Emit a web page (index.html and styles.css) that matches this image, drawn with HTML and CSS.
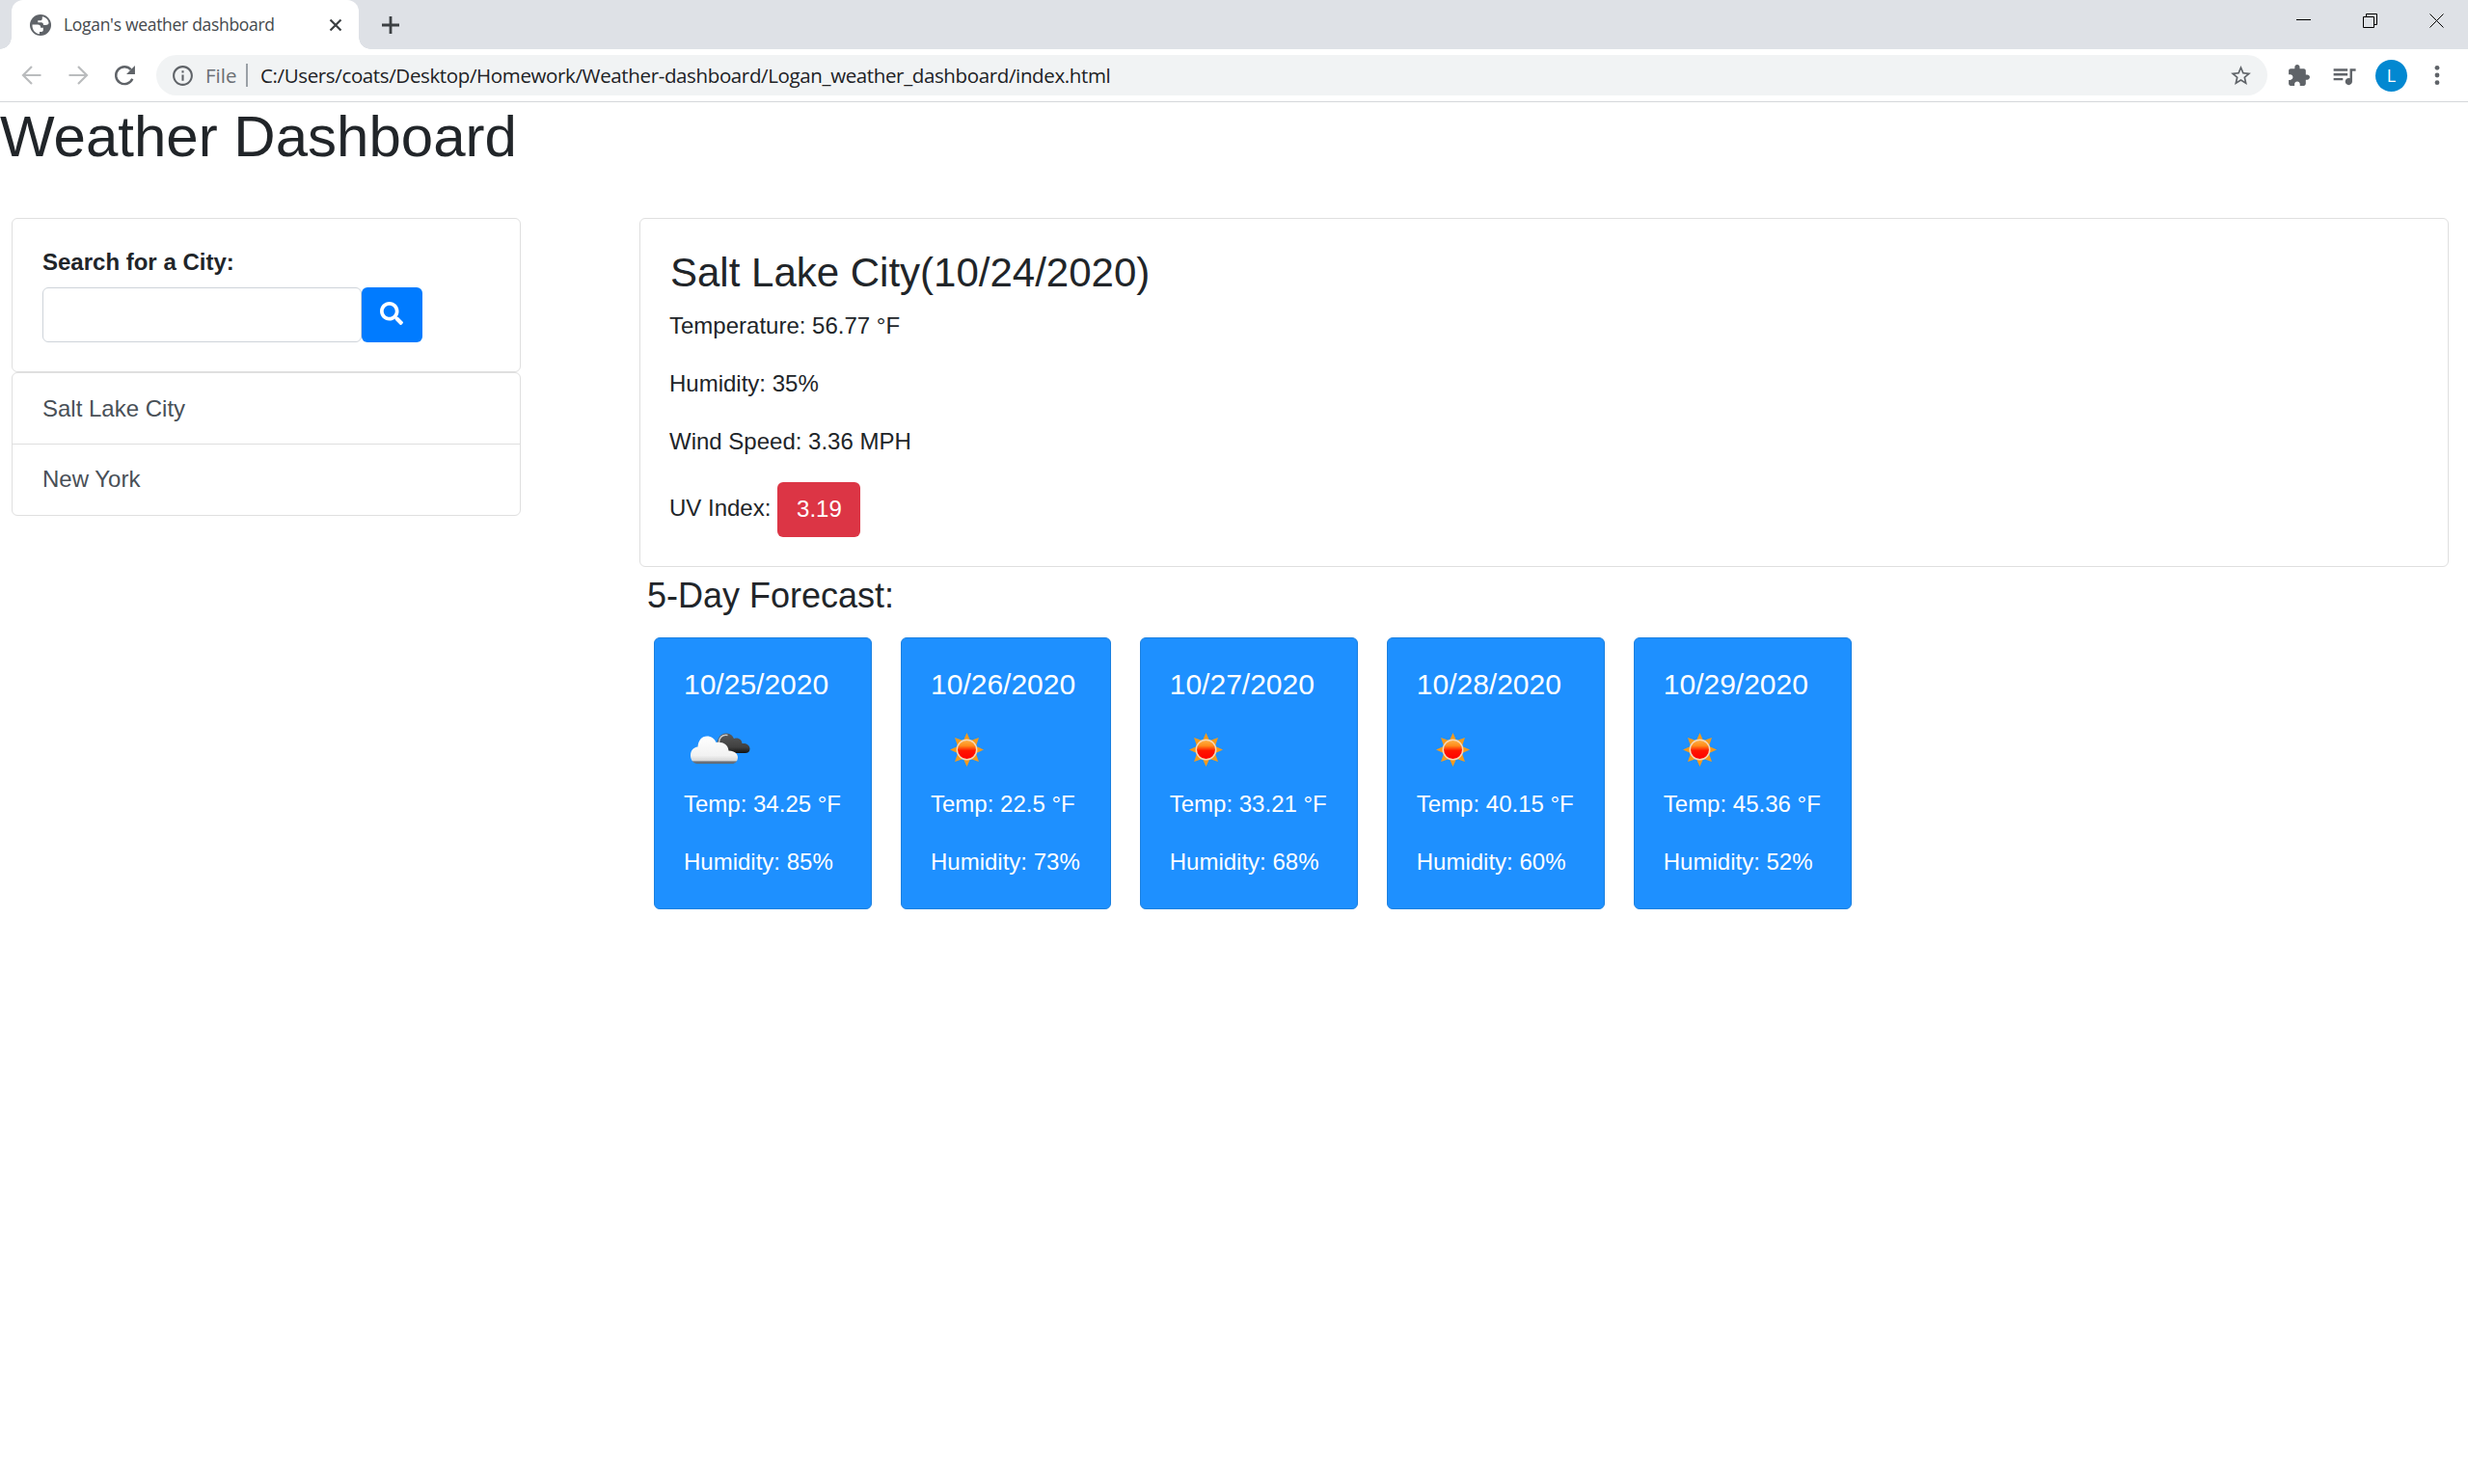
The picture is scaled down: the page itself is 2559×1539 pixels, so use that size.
FILE: index.html
```html
<!DOCTYPE html>
<html lang="en">
<head>
<meta charset="utf-8">
<title>Logan's weather dashboard</title>
<link rel="stylesheet" href="styles.css">
</head>
<body>
<svg class="defs" width="0" height="0" aria-hidden="true">
  <defs>
    <linearGradient id="sunFill" x1="0" y1="0" x2="0" y2="1"><stop offset="0" stop-color="#ffb347"/><stop offset=".3" stop-color="#ff8c1a"/><stop offset=".55" stop-color="#ff1500"/><stop offset="1" stop-color="#f00"/></linearGradient>
    <linearGradient id="whiteCloud" x1="0" y1="0" x2="0" y2="1"><stop offset="0" stop-color="#fff"/><stop offset=".7" stop-color="#f2f2f2"/><stop offset=".88" stop-color="#d8d8d8"/><stop offset=".93" stop-color="#6c7480"/><stop offset="1" stop-color="#5c6670"/></linearGradient>
    <linearGradient id="darkCloud" x1="0" y1="0" x2="0" y2="1"><stop offset="0" stop-color="#5a5a5a"/><stop offset=".7" stop-color="#404040"/><stop offset="1" stop-color="#111"/></linearGradient>
    <symbol id="sun" viewBox="0 0 75 75">
      <path fill="#f39a1d" d="M37.500 20l4.500 10h-9zM37.500 55l4.500-10h-9zM20 37.500l10-4.500v9zM55 37.500l-10-4.500v9zM25 25l10 3.500-6.500 6.500zM50 25l-10 3.500 6.500 6.500zM25 50l10-3.500-6.500-6.500zM50 50l-10-3.500 6.500-6.500z"/>
      <circle cx="37.500" cy="37.500" r="10.200" fill="url(#sunFill)" stroke="#f7d9b8" stroke-width="1.500"/>
    </symbol>
    <symbol id="clouds" viewBox="0 0 75 75">
      <path fill="url(#darkCloud)" d="M35 38C33 28 37 20.500 44 20.500c4 0 6.500 2 8 5.500 5-1.500 8 1 8.500 5 4-.5 8 1.500 8 5.500 0 3-2 4.500-5 4.500H42z"/>
      <path fill="none" stroke="#c8c8c8" stroke-width="1.500" d="M36.500 31c-.5-6 3.500-9.500 9-8.500"/>
      <path fill="url(#whiteCloud)" d="M14 52c-4 0-7-4-7-8.500 0-5 3-8.500 7.500-9C15 28 18.500 23.500 24 23.500c4.500 0 8 2.500 9.500 6.500 7-1 12.500 2.500 13 8.500 5 0 9.500 2.500 9.500 7 0 4-3 6.500-6 6.500z"/>
    </symbol>
  </defs>
</svg>

<div class="browser">
  <div class="tabstrip">
    <div class="tab">
      <svg class="globe" viewBox="0 0 26 26"><circle cx="13" cy="13" r="11"/><path class="land" d="M4.500 12.500h5.500c2.200 0 3.200 1.200 3.200 3.200h2.600v2.600c0 1-.8 1.700-1.800 1.700h-2v2.200C7.300 21.800 4.200 17.800 4.500 12.500zM14.800 4.300v2c0 1.400-1 2-2.300 2h-2.200v2h3.400c1.600 0 2.300 1 2.300 2.600h2.200c1.800 0 3.100-.6 3.400-1.900C21.300 7.500 18.500 4.800 14.800 4.300z"/></svg>
      <span class="tab-title">Logan's weather dashboard</span>
      <svg class="tab-close" viewBox="0 0 14 14"><path d="M1.500 1.500l11 11M12.500 1.500l-11 11"/></svg>
    </div>
    <svg class="new-tab" viewBox="0 0 18 18"><path d="M9 0v18M0 9h18"/></svg>
    <div class="window-controls">
      <svg viewBox="0 0 16 16"><path d="M0 6.500h15"/></svg>
      <svg viewBox="0 0 16 16"><path d="M.5 3.500h11v11H.5zM3.500 3.500v-3h11v11h-3"/></svg>
      <svg viewBox="0 0 16 16"><path d="M.5 .5l14 14M14.500 .5l-14 14"/></svg>
    </div>
  </div>
  <div class="toolbar">
    <svg class="nav" viewBox="0 0 24 24"><path d="M21.500 12H3.500M12 3l-9 9 9 9"/></svg>
    <svg class="nav" viewBox="0 0 24 24"><path d="M2.500 12h18M12 3l9 9-9 9"/></svg>
    <svg class="reload" viewBox="0 0 24 24"><path class="ring" d="M19.500 15.200a8.600 8.600 0 1 1-1.400-9.200"/><path class="tip" d="M22 2v8.500h-8.500z"/></svg>
    <div class="omnibox">
      <svg class="info" viewBox="0 0 24 24"><path d="M11 7h2v2h-2zm0 4h2v6h-2zm1-9C6.480 2 2 6.480 2 12s4.480 10 10 10 10-4.480 10-10S17.520 2 12 2zm0 18c-4.410 0-8-3.590-8-8s3.590-8 8-8 8 3.590 8 8-3.590 8-8 8z"/></svg>
      <span class="scheme">File</span>
      <span class="divider"></span>
      <span class="url">C:/Users/coats/Desktop/Homework/Weather-dashboard/Logan_weather_dashboard/index.html</span>
      <svg class="star" viewBox="0 0 24 24"><path d="M22 9.240l-7.190-.62L12 2 9.190 8.630 2 9.240l5.460 4.730L5.820 21 12 17.270 18.180 21l-1.630-7.030L22 9.240zM12 15.400l-3.760 2.270 1-4.280-3.320-2.880 4.380-.38L12 6.100l1.710 4.040 4.380.38-3.320 2.880 1 4.280L12 15.400z"/></svg>
    </div>
    <svg class="puzzle" viewBox="0 0 24 24"><path d="M20.500 11H19V7c0-1.100-.9-2-2-2h-4V3.500C13 2.120 11.880 1 10.500 1S8 2.120 8 3.500V5H4c-1.100 0-1.990.9-1.990 2v3.800H3.500c1.490 0 2.700 1.210 2.700 2.700s-1.210 2.700-2.700 2.700H2V20c0 1.100.9 2 2 2h3.800v-1.500c0-1.490 1.210-2.700 2.700-2.700 1.490 0 2.700 1.210 2.700 2.700V22H17c1.100 0 2-.9 2-2v-4h1.500c1.380 0 2.500-1.120 2.500-2.500S21.880 11 20.500 11z"/></svg>
    <svg class="queue" viewBox="0 0 24 24"><path d="M15 6H3v2h12V6zm0 4H3v2h12v-2zM3 16h8v-2H3v2zM17 6v8.180c-.31-.11-.65-.18-1-.18-1.660 0-3 1.340-3 3s1.340 3 3 3 3-1.340 3-3V8h3V6h-5z"/></svg>
    <span class="avatar">L</span>
    <svg class="menu" viewBox="0 0 6 22"><circle cx="3" cy="3.300" r="2.400"/><circle cx="3" cy="11" r="2.400"/><circle cx="3" cy="18.700" r="2.400"/></svg>
  </div>
</div>

<h1>Weather Dashboard</h1>
<div class="layout">
  <aside class="sidebar">
    <div class="card search-card">
      <label for="city">Search for a City:</label>
      <div class="search-row">
        <input id="city" type="text">
        <button class="btn btn-primary" aria-label="Search"><svg viewBox="0 0 512 512"><path d="M505 442.700L405.300 343c-4.500-4.500-10.600-7-17-7H372c27.600-35.300 44-79.700 44-128C416 93.100 322.900 0 208 0S0 93.100 0 208s93.100 208 208 208c48.300 0 92.700-16.400 128-44v16.300c0 6.400 2.500 12.500 7 17l99.700 99.700c9.400 9.400 24.600 9.400 33.900 0l28.300-28.300c9.400-9.400 9.400-24.600.1-34zM208 336c-70.700 0-128-57.200-128-128 0-70.700 57.200-128 128-128 70.700 0 128 57.200 128 128 0 70.700-57.200 128-128 128z"/></svg></button>
      </div>
    </div>
    <ul class="card city-list">
      <li>Salt Lake City</li>
      <li>New York</li>
    </ul>
  </aside>
  <main class="main">
    <section class="card current">
      <h3>Salt Lake City(10/24/2020)</h3>
      <p>Temperature: 56.77 °F</p>
      <p>Humidity: 35%</p>
      <p>Wind Speed: 3.36 MPH</p>
      <div class="uv"><span>UV Index:</span><button class="btn btn-danger">3.19</button></div>
    </section>
    <h4>5-Day Forecast:</h4>
    <section class="forecast">
      <article class="card day"><h5>10/25/2020</h5><svg><use href="#clouds"/></svg><p>Temp: 34.25 °F</p><p>Humidity: 85%</p></article>
      <article class="card day"><h5>10/26/2020</h5><svg><use href="#sun"/></svg><p>Temp: 22.5 °F</p><p>Humidity: 73%</p></article>
      <article class="card day"><h5>10/27/2020</h5><svg><use href="#sun"/></svg><p>Temp: 33.21 °F</p><p>Humidity: 68%</p></article>
      <article class="card day"><h5>10/28/2020</h5><svg><use href="#sun"/></svg><p>Temp: 40.15 °F</p><p>Humidity: 60%</p></article>
      <article class="card day"><h5>10/29/2020</h5><svg><use href="#sun"/></svg><p>Temp: 45.36 °F</p><p>Humidity: 52%</p></article>
    </section>
  </main>
</div>
</body>
</html>
```
FILE: styles.css
```css
* { box-sizing: border-box; }
body {
  margin: 0;
  background: #fff;
  color: #212529;
  font: 24px/36px "Liberation Sans", Arial, sans-serif;
  overflow: hidden;
}
h1, h3, h4, h5, p, ul { margin: 0; padding: 0; font-weight: 400; }
svg { display: block; flex: none; }
.defs { position: absolute; }

.browser { font-family: "Open Sans", "Noto Sans", sans-serif; height: 106px; border-bottom: 1px solid #d5d7da; }
.tabstrip { display: flex; align-items: center; height: 51px; background: #dee1e6; padding-left: 12px; }
.tab {
  position: relative;
  display: flex;
  align-items: center;
  width: 360px;
  height: 51px;
  padding: 0 17px;
  background: #fff;
  border-radius: 12px 12px 0 0;
}
.tab::before, .tab::after { content: ""; position: absolute; bottom: 0; width: 12px; height: 12px; }
.tab::before { left: -12px; background: radial-gradient(circle at 0 0, transparent 11.5px, #fff 12px); }
.tab::after { right: -12px; background: radial-gradient(circle at 100% 0, transparent 11.5px, #fff 12px); }
.globe { width: 26px; height: 26px; fill: #5f6368; }
.globe .land { fill: #fff; }
.tab-title { flex: 1; margin: -2px 0 0 11px; font-size: 17.500px; letter-spacing: -.3px; color: #45494d; white-space: nowrap; }
.tab-close { width: 14px; height: 14px; fill: none; stroke: #3c4043; stroke-width: 2.200; }
.new-tab { width: 18px; height: 18px; margin-left: 24px; fill: none; stroke: #3c4043; stroke-width: 2.800; }
.window-controls { display: flex; gap: 53px; margin: -8px 24px 0 auto; }
.window-controls svg { width: 16px; height: 16px; fill: none; stroke: #000; }

.toolbar { display: flex; align-items: center; height: 54px; padding-left: 21px; }
.nav { width: 24px; height: 24px; margin-right: 24px; fill: none; stroke: #babcbe; stroke-width: 2.200; }
.reload { width: 25px; height: 25px; margin-right: 20px; }
.reload .ring { fill: none; stroke: #5f6368; stroke-width: 2.300; }
.reload .tip { fill: #5f6368; }
.omnibox {
  display: flex;
  align-items: center;
  width: 2189px;
  height: 42px;
  padding: 0 15px;
  background: #f1f3f4;
  border-radius: 21px;
  font-size: 20.500px;
  white-space: nowrap;
}
.info, .star { width: 25px; height: 25px; fill: #5f6368; }
.scheme { margin-left: 11px; width: 42px; color: #6b6f74; }
.divider { width: 2px; height: 24px; margin-right: 13px; background: #9aa0a6; }
.url { flex: 1; letter-spacing: -.365px; color: #202124; }
.puzzle { width: 25px; height: 25px; margin-left: 20px; fill: #5f6368; }
.queue { width: 29px; height: 29px; margin-left: 20px; fill: #5f6368; }
.avatar { width: 33px; height: 33px; margin-left: 18px; border-radius: 50%; background: #0288d1; color: #fff; font-size: 18px; line-height: 33px; text-align: center; }
.menu { width: 6px; height: 22px; margin-left: 28px; fill: #5f6368; }

h1 { height: 72px; font-size: 60px; line-height: 72px; }
.layout { display: flex; align-items: flex-start; gap: 123px; padding: 48px 20px 0 12px; }
.card { border: 1px solid #dfdfdf; border-radius: 6px; background: #fff; }
.sidebar { width: 528px; }
.search-card { height: 160px; padding: 27px 31px 0; }
.search-card label { display: block; height: 44px; font-weight: 700; }
.search-row { display: flex; }
.search-row input { width: 331px; height: 57px; border: 1px solid #ced4da; border-radius: 6px; background: #fff; }
.btn { height: 57px; padding: 0; border: 0; border-radius: 6px; color: #fff; font: inherit; }
.btn-primary { width: 63px; background: #007bff; }
.btn-primary svg { width: 24px; height: 24px; margin: -3px 0 0 19px; fill: #fff; }
.btn-danger { width: 86px; padding-bottom: 1px; background: #dc3545; }
.city-list { list-style: none; color: #495057; }
.city-list li { padding: 19px 31px 18px; }
.city-list li + li { border-top: 1px solid #dfdfdf; padding: 18px 31px 19px; }

.main { flex: 1; }
.current { height: 362px; padding: 30px 31px 30px 30px; }
.current h3 { height: 63px; padding-left: 1px; font-size: 42px; line-height: 51px; }
.current p { margin-bottom: 24px; }
.uv { display: flex; align-items: center; gap: 7px; }
.uv span { margin-top: -3px; }
.main h4 { margin: 8px 0 0 8px; height: 65px; font-size: 36px; line-height: 43px; }
.forecast { display: flex; gap: 30px; padding-left: 15px; }
.day { height: 282px; padding: 30px 31px 30px 30px; background: #1e90ff; border-color: #1b80e0; color: #fff; }
.day h5 { height: 48px; font-size: 30px; line-height: 36px; }
.day svg { width: 75px; height: 75px; margin-bottom: 1px; }
.day p { white-space: nowrap; }
.day p + p { margin-top: 24px; }
```
